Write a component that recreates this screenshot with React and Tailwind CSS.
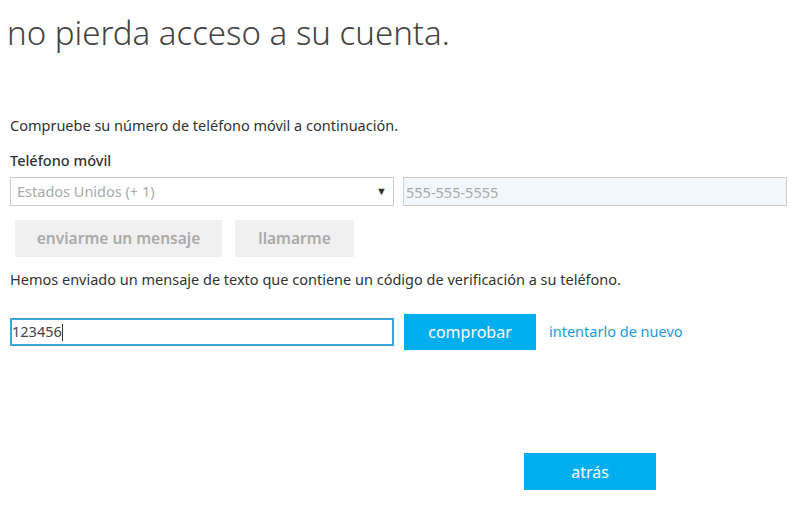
export default function App() {
  return (
    <div className="w-[800px] h-[515px] bg-white text-[#333] font-['Noto_Sans',sans-serif] overflow-hidden">
      <h1 className="pl-[7px] pt-[11px] text-[33px] leading-[43px] font-light text-[#444]">
        no pierda acceso a su cuenta.
      </h1>

      <div className="pl-[10px] pr-[13px]">
        <p className="mt-[61px] text-[14.5px] leading-[20px]">
          Compruebe su número de teléfono móvil a continuación.
        </p>

        <label className="block mt-[15px] text-[14.5px] leading-[20px] font-medium text-[#333]">
          Teléfono móvil
        </label>

        <div className="mt-[7px] flex gap-[9px]">
          <div className="w-[384px] h-[29px] border border-[#ccc] flex items-center justify-between pl-[6px] pr-[6px]">
            <span className="text-[14.5px] text-[#aaa]">Estados Unidos (+ 1)</span>
            <span className="text-[11px] text-[#333]">▼</span>
          </div>
          <input
            className="flex-1 h-[29px] border border-[#ccc] bg-[#f2f7fb] px-[2px] text-[14.5px] placeholder:text-[#aaa] outline-none"
            placeholder="555-555-5555"
            readOnly
          />
        </div>

        <div className="mt-[14px] pl-[5px] flex gap-[13px]">
          <button className="w-[207px] h-[37px] bg-[#f0f0f0] text-[#aaa] text-[15.5px] font-semibold">
            enviarme un mensaje
          </button>
          <button className="w-[119px] h-[37px] bg-[#f0f0f0] text-[#aaa] text-[15.5px] font-semibold">
            llamarme
          </button>
        </div>

        <p className="mt-[12px] text-[14.5px] leading-[20px]">
          Hemos enviado un mensaje de texto que contiene un código de verificación a su teléfono.
        </p>

        <div className="mt-[25px] flex items-center">
          <div className="w-[384px] h-[28px] border-2 border-[#3aa6d8] flex items-center">
            <span className="text-[14.5px] text-[#444]">123456</span>
            <span className="w-px h-[17px] bg-[#333]"></span>
          </div>
          <button className="ml-[10px] w-[132px] h-[36px] bg-[#00adef] text-white text-[16px]">
            comprobar
          </button>
          <a className="ml-[13px] text-[14.5px] text-[#1b9bd6]">intentarlo de nuevo</a>
        </div>

        <div className="mt-[103px] pl-[514px]">
          <button className="w-[132px] h-[37px] bg-[#00adef] text-white text-[16px]">
            atrás
          </button>
        </div>
      </div>
    </div>
  )
}
